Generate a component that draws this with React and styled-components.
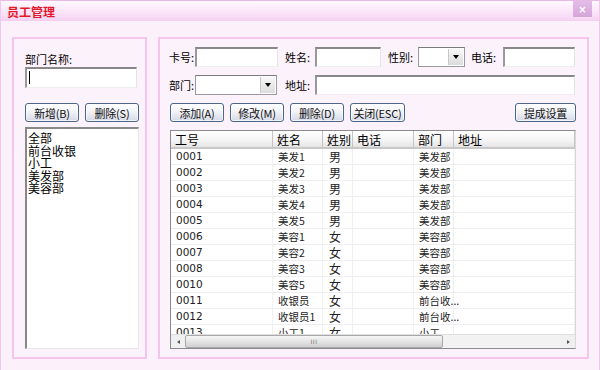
import styled, { createGlobalStyle } from "styled-components";

const GlobalStyle = createGlobalStyle`
  html, body {
    margin: 0;
    padding: 0;
    background: #fcf0fb;
  }
  body {
    font-family: "Noto Sans CJK SC", "DejaVu Sans", sans-serif;
    font-size: 12px;
    color: #000;
  }
`;

const Window = styled.div`
  width: 600px;
  height: 370px;
  box-sizing: border-box;
  background: #fcf0fb;
  border-left: 1px solid #f0c8ec;
  border-right: 1px solid #f0c8ec;
  border-top: 1px solid #e8b8e4;
  display: flex;
  flex-direction: column;
  overflow: hidden;
`;

const TitleBar = styled.div`
  height: 20px;
  flex: 0 0 20px;
  box-sizing: border-box;
  background: linear-gradient(#fff8fe, #fbe4f8 60%, #f6d4f2);
  border-bottom: 1px solid #f4d0f0;
  display: flex;
  align-items: flex-start;
  justify-content: space-between;
  padding: 0 7px 0 6px;
`;

const Title = styled.span`
  align-self: center;
  color: #e4182c;
  font-weight: bold;
  font-size: 12px;
  line-height: 1;
  margin-top: 2px;
`;

const CloseButton = styled.div`
  width: 19px;
  height: 16px;
  background: linear-gradient(#e2bce6, #d6a6da);
  color: #fff;
  font-family: "DejaVu Sans", sans-serif;
  font-size: 10px;
  font-weight: bold;
  display: flex;
  align-items: center;
  justify-content: center;
`;

const Body = styled.div`
  flex: 1;
  display: flex;
  gap: 11px;
  padding: 16px 10px 12px 11px;
`;

const Panel = styled.div`
  box-sizing: border-box;
  border: 2px solid #f4c6ee;
  background: #fcf2fb;
  height: 322px;
  display: flex;
  flex-direction: column;
  width: ${(p) => p.$w}px;
`;

const LeftPanel = styled(Panel)`
  padding: 12px 5px 8px 11px;
`;

const RightPanel = styled(Panel)`
  padding: 8px 11px 8px 9px;
`;

const Label = styled.span`
  display: inline-block;
  width: ${(p) => (p.$w ? `${p.$w}px` : "auto")};
  font-size: 11px;
  white-space: nowrap;
  line-height: ${(p) => p.$lh || 20}px;
`;

const Input = styled.div`
  box-sizing: border-box;
  width: ${(p) => p.$w}px;
  height: ${(p) => p.$h || 20}px;
  background: #fff;
  border-top: 2px solid #888;
  border-left: 2px solid #999;
  border-right: 1px solid #e4e4e4;
  border-bottom: 1px solid #eee;
  position: relative;
`;

const Caret = styled.div`
  position: absolute;
  left: 2px;
  top: 2px;
  width: 1px;
  height: 13px;
  background: #000;
`;

const SelectBox = styled.div`
  box-sizing: border-box;
  width: ${(p) => p.$w}px;
  height: 20px;
  background: #fff;
  border: 1px solid #9a9a9a;
  border-top-color: #7a7a7a;
  display: flex;
  justify-content: flex-end;
  padding: 1px;
`;

const DropArrow = styled.div`
  width: 14px;
  height: 100%;
  background: linear-gradient(#f8f8f8, #dcdcdc);
  border-left: 1px solid #c8c8c8;
  display: flex;
  align-items: center;
  justify-content: center;
  &::after {
    content: "";
    border-left: 3px solid transparent;
    border-right: 3px solid transparent;
    border-top: 4px solid #000;
  }
`;

const FieldRow = styled.div`
  display: flex;
  align-items: center;
  margin-top: ${(p) => p.$mt || 0}px;
`;

const Field = styled.div`
  display: flex;
  align-items: center;
  margin-right: ${(p) => p.$mr || 0}px;
`;

const Button = styled.div`
  box-sizing: border-box;
  width: ${(p) => p.$w || 54}px;
  height: 19px;
  border: 1px solid #4a6688;
  border-radius: 3px;
  background: linear-gradient(#ffffff, #f2f3f8 45%, #d4d8e6);
  box-shadow: inset 0 0 0 1px rgba(255, 255, 255, 0.7);
  display: flex;
  align-items: center;
  justify-content: center;
  font-size: 11px;
  color: #111;
  white-space: nowrap;
  letter-spacing: -0.2px;
`;

const ButtonRow = styled.div`
  display: flex;
  gap: 6px;
  margin-top: ${(p) => p.$mt || 0}px;
  margin-left: ${(p) => p.$ml || 0}px;
`;

const Spacer = styled.div`
  flex: 1;
`;

const ListBox = styled.div`
  box-sizing: border-box;
  margin-top: 5px;
  width: 114px;
  flex: 1;
  background: #fff;
  border-top: 2px solid #888;
  border-left: 2px solid #888;
  border-right: 1px solid #e8e8e8;
  border-bottom: 1px solid #e8e8e8;
  padding: 3px 0 0 1px;
  font-size: 12px;
  line-height: 12.5px;
`;

const ListItem = styled.div`
  white-space: nowrap;
`;

const Table = styled.div`
  box-sizing: border-box;
  margin-top: 8px;
  margin-left: 1px;
  width: 406px;
  height: 219px;
  background: #fff;
  border: 1px solid #8a8a8a;
  border-right-color: #d8d8d8;
  display: flex;
  flex-direction: column;
  overflow: hidden;
`;

const Grid = styled.div`
  flex: 1;
  overflow: hidden;
`;

const cols = "102px 50px 30px 61px 40px 1fr";

const HeaderRow = styled.div`
  display: grid;
  grid-template-columns: ${cols};
  height: 18px;
  background: linear-gradient(#ffffff, #f4f4f4 60%, #e4e4e4);
  border-bottom: 2px solid #c8c8c8;
  box-sizing: border-box;
`;

const HeaderCell = styled.div`
  border-right: 1px solid #c4c4c4;
  padding-left: 4px;
  font-size: 12px;
  line-height: 17px;
  white-space: nowrap;
  overflow: hidden;
`;

const DataRow = styled.div`
  display: grid;
  grid-template-columns: ${cols};
  height: 16px;
  border-bottom: 1px solid #eeeeee;
  box-sizing: border-box;
`;

const Cell = styled.div`
  border-right: 1px solid #f0f0f0;
  padding-left: ${(p) => (p.$big ? 6 : 5)}px;
  font-size: ${(p) => (p.$big ? 12 : 10.5)}px;
  font-family: ${(p) =>
    p.$num ? '"DejaVu Sans", sans-serif' : '"Noto Sans CJK SC", sans-serif'};
  line-height: 15px;
  white-space: nowrap;
  color: #222;
`;

const HScroll = styled.div`
  height: 13px;
  flex: 0 0 13px;
  display: flex;
  background: #f0f0f0;
  border-top: 1px solid #e0e0e0;
`;

const ScrollArrow = styled.div`
  width: 14px;
  display: flex;
  align-items: center;
  justify-content: center;
  &::after {
    content: "";
    border-top: 2.5px solid transparent;
    border-bottom: 2.5px solid transparent;
    ${(p) =>
      p.$dir === "left"
        ? "border-right: 3px solid #555;"
        : "border-left: 3px solid #555;"}
  }
`;

const Thumb = styled.div`
  width: 258px;
  box-sizing: border-box;
  border: 1px solid #a8a8a8;
  border-radius: 2px;
  background: linear-gradient(#f6f6f6, #e4e4e4 50%, #d0d0d0);
  display: flex;
  align-items: center;
  justify-content: center;
  font-size: 6px;
  color: #777;
  letter-spacing: 0.5px;
  font-family: "DejaVu Sans", sans-serif;
`;

const Track = styled.div`
  flex: 1;
  background: #f2f2f2;
`;

const rows = [
  ["0001", "美发1", "男", "", "美发部"],
  ["0002", "美发2", "男", "", "美发部"],
  ["0003", "美发3", "男", "", "美发部"],
  ["0004", "美发4", "男", "", "美发部"],
  ["0005", "美发5", "男", "", "美发部"],
  ["0006", "美容1", "女", "", "美容部"],
  ["0007", "美容2", "女", "", "美容部"],
  ["0008", "美容3", "女", "", "美容部"],
  ["0010", "美容5", "女", "", "美容部"],
  ["0011", "收银员", "女", "", "前台收..."],
  ["0012", "收银员1", "女", "", "前台收..."],
  ["0013", "小工1", "女", "", "小工"],
];

const departments = ["全部", "前台收银", "小工", "美发部", "美容部"];

export default function App() {
  return (
    <>
      <GlobalStyle />
      <Window>
        <TitleBar>
          <Title>员工管理</Title>
          <CloseButton>×</CloseButton>
        </TitleBar>
        <Body>
          <LeftPanel $w={136}>
            <Label $lh={16}>部门名称:</Label>
            <Input $w={112} $h={21}>
              <Caret />
            </Input>
            <ButtonRow $mt={15}>
              <Button>新增(B)</Button>
              <Button>删除(S)</Button>
            </ButtonRow>
            <ListBox>
              {departments.map((d) => (
                <ListItem key={d}>{d}</ListItem>
              ))}
            </ListBox>
          </LeftPanel>
          <RightPanel $w={431}>
            <FieldRow>
              <Field $mr={7}>
                <Label $w={26}>卡号:</Label>
                <Input $w={83} />
              </Field>
              <Field $mr={7}>
                <Label $w={30}>姓名:</Label>
                <Input $w={66} />
              </Field>
              <Field $mr={6}>
                <Label $w={30}>性别:</Label>
                <SelectBox $w={47}>
                  <DropArrow />
                </SelectBox>
              </Field>
              <Field>
                <Label $w={32}>电话:</Label>
                <Input $w={72} />
              </Field>
            </FieldRow>
            <FieldRow $mt={8}>
              <Field $mr={8}>
                <Label $w={26}>部门:</Label>
                <SelectBox $w={82}>
                  <DropArrow />
                </SelectBox>
              </Field>
              <Field>
                <Label $w={30}>地址:</Label>
                <Input $w={260} />
              </Field>
            </FieldRow>
            <ButtonRow $mt={8} $ml={1}>
              <Button>添加(A)</Button>
              <Button>修改(M)</Button>
              <Button>删除(D)</Button>
              <Button $w={55}>关闭(ESC)</Button>
              <Spacer />
              <Button $w={61}>提成设置</Button>
            </ButtonRow>
            <Table>
              <Grid>
                <HeaderRow>
                  <HeaderCell>工号</HeaderCell>
                  <HeaderCell>姓名</HeaderCell>
                  <HeaderCell>姓别</HeaderCell>
                  <HeaderCell>电话</HeaderCell>
                  <HeaderCell>部门</HeaderCell>
                  <HeaderCell>地址</HeaderCell>
                </HeaderRow>
                {rows.map((r) => (
                  <DataRow key={r[0]}>
                    <Cell $num>{r[0]}</Cell>
                    <Cell>{r[1]}</Cell>
                    <Cell $big>{r[2]}</Cell>
                    <Cell>{r[3]}</Cell>
                    <Cell>{r[4]}</Cell>
                    <Cell />
                  </DataRow>
                ))}
              </Grid>
              <HScroll>
                <ScrollArrow $dir="left" />
                <Thumb>III</Thumb>
                <Track />
                <ScrollArrow $dir="right" />
              </HScroll>
            </Table>
          </RightPanel>
        </Body>
      </Window>
    </>
  );
}
